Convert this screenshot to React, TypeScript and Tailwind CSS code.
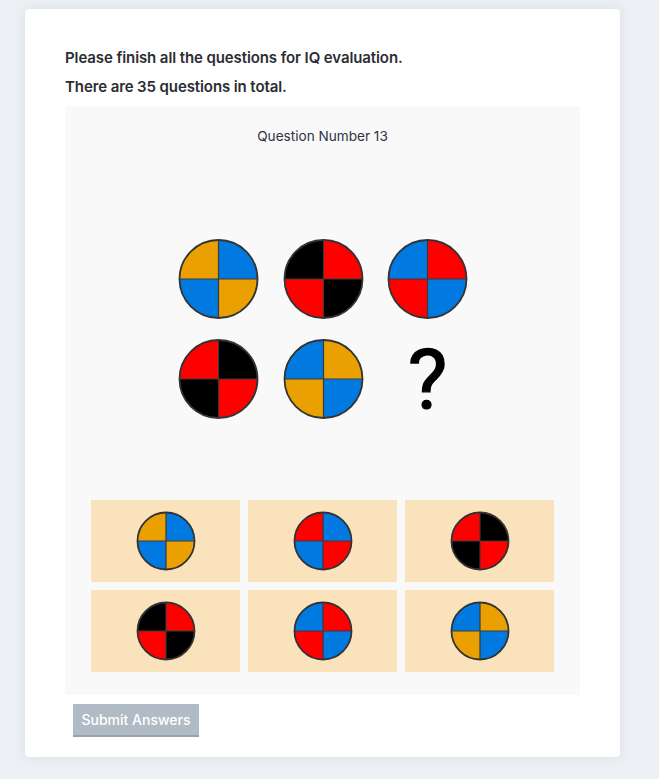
import React from "react";

const O = "#e9a000";
const B = "#0079e0";
const R = "#ff0000";
const K = "#000000";

function Quad({ cx, cy, r, c }: { cx: number; cy: number; r: number; c: [string, string, string, string] }) {
  const [tl, tr, bl, br] = c;
  return (
    <g>
      <path d={`M${cx} ${cy} L${cx} ${cy - r} A${r} ${r} 0 0 0 ${cx - r} ${cy} Z`} fill={tl} />
      <path d={`M${cx} ${cy} L${cx + r} ${cy} A${r} ${r} 0 0 0 ${cx} ${cy - r} Z`} fill={tr} />
      <path d={`M${cx} ${cy} L${cx - r} ${cy} A${r} ${r} 0 0 0 ${cx} ${cy + r} Z`} fill={bl} />
      <path d={`M${cx} ${cy} L${cx} ${cy + r} A${r} ${r} 0 0 0 ${cx + r} ${cy} Z`} fill={br} />
      <line x1={cx - r} y1={cy} x2={cx + r} y2={cy} stroke="#3a3a3a" strokeWidth={1.2} />
      <line x1={cx} y1={cy - r} x2={cx} y2={cy + r} stroke="#3a3a3a" strokeWidth={1.2} />
      <circle cx={cx} cy={cy} r={r} fill="none" stroke="#333" strokeWidth={1.8} />
    </g>
  );
}

const options: [string, string, string, string][] = [
  [O, B, B, O],
  [R, B, B, R],
  [R, K, K, R],
  [K, R, R, K],
  [B, R, R, B],
  [B, O, O, B],
];

export default function App() {
  return (
    <div
      className="min-h-[779px] w-full bg-[#edf0f4] pt-[9px] pb-[22px]"
      style={{ fontFamily: "Inter, 'Liberation Sans', sans-serif" }}
    >
      <div className="ml-[25px] w-[595px] rounded-[4px] bg-white px-[40px] pt-[39px] pb-[20px] shadow-[0_0_12px_rgba(180,190,205,0.35)]">
        <p className="text-[15px] font-semibold leading-[20px] tracking-[-0.1px] text-[#2b2d33]">
          Please finish all the questions for IQ evaluation.
        </p>
        <p className="mt-[9px] text-[15px] font-semibold leading-[20px] tracking-[-0.1px] text-[#2b2d33]">
          There are 35 questions in total.
        </p>
        <div className="mt-[9px] flex flex-col items-center bg-[#f9f9f9] px-[26px] pt-[21px] pb-[23px]">
          <p className="text-[13.6px] leading-[18px] text-[#2f3342]">Question Number 13</p>
          <svg width="300" height="190" viewBox="0 0 300 190" className="mt-[94px] overflow-visible">
            <Quad cx={45.5} cy={40} r={39} c={[O, B, B, O]} />
            <Quad cx={150.5} cy={40} r={39} c={[K, R, R, K]} />
            <Quad cx={254.5} cy={40} r={39} c={[B, R, R, B]} />
            <Quad cx={45.5} cy={140} r={39} c={[R, K, K, R]} />
            <Quad cx={150.5} cy={140} r={39} c={[B, O, O, B]} />
            <text
              x={254.5}
              y={170}
              textAnchor="middle"
              fontSize={84}
              fontWeight={400}
              fill="#000"
              stroke="#000"
              strokeWidth={1.2}
              fontFamily="Roboto, 'Liberation Sans', sans-serif"
            >
              ?
            </text>
          </svg>
          <div className="mt-[71px] grid w-full grid-cols-3 gap-[8px]">
            {options.map((c, i) => (
              <div key={i} className="flex h-[82px] items-center justify-center bg-[#f9e2bc]">
                <svg width="60" height="60" viewBox="0 0 60 60">
                  <Quad cx={30} cy={30} r={28.5} c={c} />
                </svg>
              </div>
            ))}
          </div>
        </div>
        <button className="mt-[9px] ml-[8px] h-[33px] w-[126px] border-b-2 border-[#98a2ac] bg-[#b0bbc5] text-[14px] font-medium text-white">
          Submit Answers
        </button>
      </div>
    </div>
  );
}
